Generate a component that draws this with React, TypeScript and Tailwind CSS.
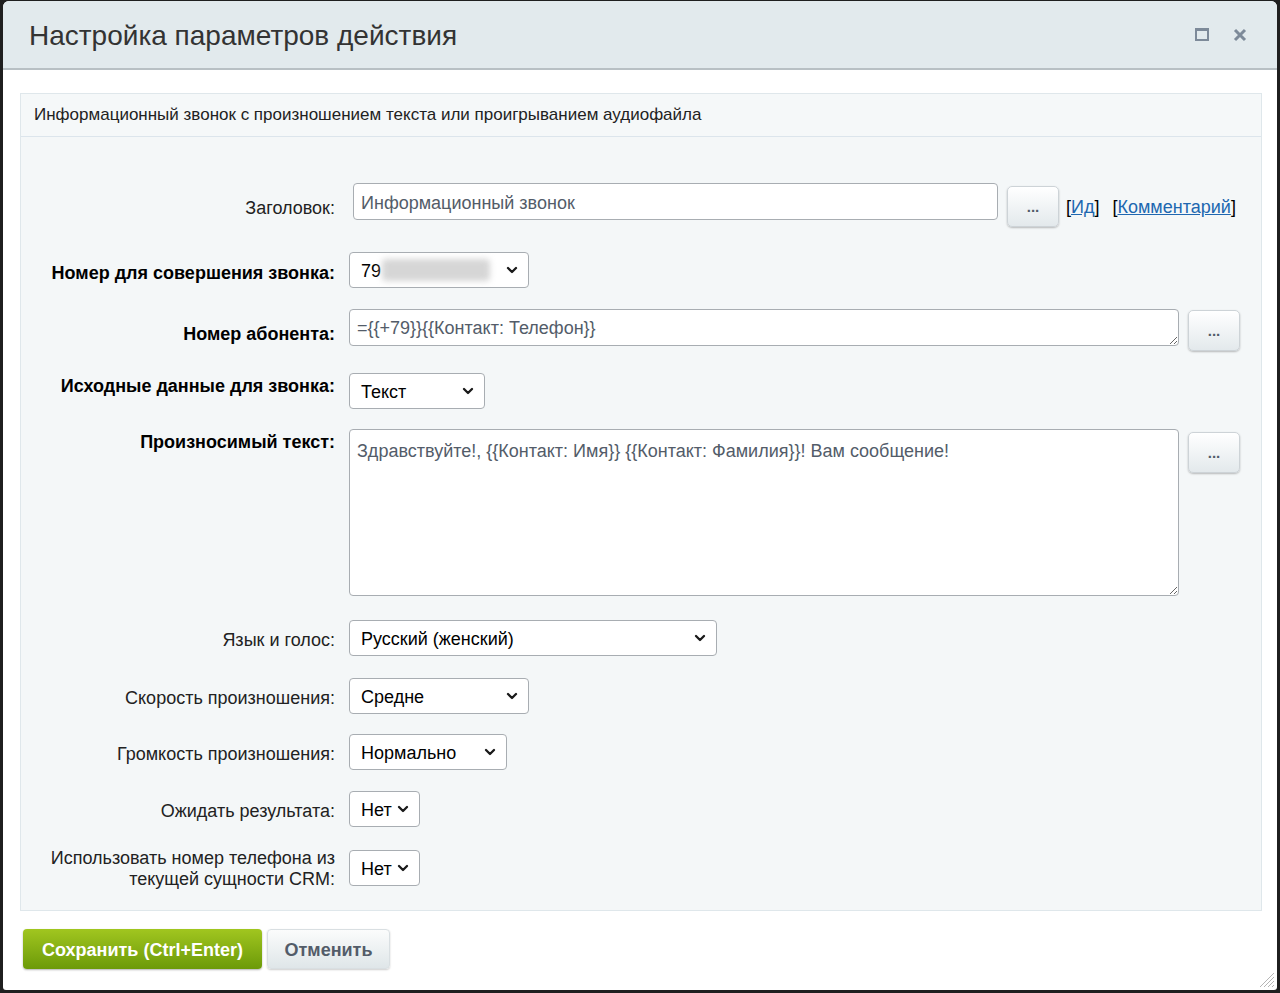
import { ChevronDown } from "lucide-react";

const font = "font-['Helvetica','Liberation_Sans',Arial,sans-serif]";

function Select({ value, w, blur }: { value: string; w: string; blur?: boolean }) {
  return (
    <div
      className={`relative flex h-[36px] items-center rounded-[4px] border border-[#a8adb2] bg-white pl-[11px] pt-[3px] text-[18px] text-black ${w}`}
    >
      <span>{value}</span>
      {blur && <span className="ml-[1px] -mt-[3px] h-[22px] w-[108px] rounded bg-[#d6d6d6] blur-[3px]" />}
      <ChevronDown
        size={16}
        strokeWidth={3.5}
        className="absolute right-[8px] top-[9px] text-[#1a1a1a]"
      />
    </div>
  );
}

function DotsButton({ className = "" }: { className?: string }) {
  return (
    <button
      className={`flex h-[41px] w-[52px] items-center justify-center rounded-[5px] border border-[#cdd3d7] bg-gradient-to-b from-[#ffffff] to-[#e3e9ec] text-[15px] font-bold leading-none text-[#535c69] shadow-[0_1px_2px_rgba(0,0,0,0.25)] ${className}`}
    >
      ...
    </button>
  );
}

function Label({ children, bold, className = "" }: { children: React.ReactNode; bold?: boolean; className?: string }) {
  return (
    <div
      className={`w-[314px] shrink-0 text-right text-[18px] leading-[21px] ${bold ? "font-bold text-black" : "text-[#222]"} ${className}`}
    >
      {children}
    </div>
  );
}

export default function App() {
  return (
    <div className={`h-[993px] w-[1280px] overflow-hidden bg-[#1f1f1f] pt-[1px] ${font}`}>
      <div className="relative ml-[3px] mr-[3px] flex h-[989px] flex-col overflow-hidden rounded-t-[6px] rounded-b-[3px] bg-white">
        {/* header */}
        <div className="flex h-[69px] shrink-0 items-center border-b-2 border-[#b8c0c4] bg-[#e2eaed] pl-[26px] pr-[30px]">
          <h1 className="flex-1 pt-[3px] text-[28px] font-normal text-[#333]">Настройка параметров действия</h1>
          <div className="flex items-center gap-[24px]">
            <svg width="14" height="13" viewBox="0 0 14 13" className="text-[#7d8a99]">
              <rect x="1" y="1" width="12" height="11" fill="none" stroke="currentColor" strokeWidth="2" />
              <rect x="1" y="1" width="12" height="2" fill="currentColor" />
            </svg>
            <svg width="14" height="14" viewBox="0 0 14 14" className="text-[#7d8a99]">
              <path d="M2 2 L12 12 M12 2 L2 12" stroke="currentColor" strokeWidth="3" />
            </svg>
          </div>
        </div>

        {/* panel */}
        <div className="ml-[17px] mr-[15px] mt-[23px] flex h-[818px] flex-col border border-[#dfe7eb] bg-[#f4f7f8]">
          <div className="flex h-[43px] shrink-0 items-center border-b border-[#dce5ec] bg-[#f5f8f9] pl-[13px] text-[17px] text-[#222]">
            Информационный звонок с произношением текста или проигрыванием аудиофайла
          </div>

          <div className="flex flex-col pt-[46px]">
            {/* Заголовок */}
            <div className="flex items-start">
              <Label className="pt-[15px]">Заголовок:</Label>
              <div className="ml-[18px] flex items-start">
                <div className="flex h-[37px] w-[645px] items-center rounded-[4px] border border-[#a8adb2] bg-white pl-[7px] pt-[3px] text-[18px] text-[#535c69]">
                  Информационный звонок
                </div>
                <DotsButton className="ml-[9px] mt-[3px]" />
                <div className="ml-[7px] mt-[14px] text-[18px] leading-[21px] text-black">
                  [<a className="text-[#2067b0] underline">Ид</a>]
                </div>
                <div className="ml-[13px] mt-[14px] text-[18px] leading-[21px] text-black">
                  [<a className="text-[#2067b0] underline">Комментарий</a>]
                </div>
              </div>
            </div>

            {/* Номер для совершения */}
            <div className="mt-[25px] flex items-start">
              <Label bold className="pt-[11px]">Номер для совершения звонка:</Label>
              <div className="ml-[14px]">
                <Select value="79" w="w-[180px]" blur />
              </div>
            </div>

            {/* Номер абонента */}
            <div className="mt-[21px] flex items-start">
              <Label bold className="pt-[15px]">Номер абонента:</Label>
              <div className="ml-[14px] flex items-start">
                <textarea
                  readOnly
                  value="={{+79}}{{Контакт: Телефон}}"
                  className="block h-[37px] w-[830px] resize rounded-[4px] border border-[#a8adb2] bg-white px-[7px] pt-[8px] text-[18px] leading-[21px] text-[#535c69] outline-none"
                />
                <DotsButton className="ml-[9px] mt-[1px]" />
              </div>
            </div>

            {/* Исходные данные */}
            <div className="mt-[22px] flex items-start">
              <Label bold className="pt-[3px]">Исходные данные для звонка:</Label>
              <div className="ml-[14px]">
                <Select value="Текст" w="w-[136px]" />
              </div>
            </div>

            {/* Произносимый текст */}
            <div className="mt-[20px] flex items-start">
              <Label bold className="pt-[3px]">Произносимый текст:</Label>
              <div className="ml-[14px] flex items-start">
                <textarea
                  readOnly
                  value="Здравствуйте!, {{Контакт: Имя}} {{Контакт: Фамилия}}! Вам сообщение!"
                  className="block h-[167px] w-[830px] resize rounded-[4px] border border-[#a8adb2] bg-white px-[7px] pt-[11px] text-[18px] leading-[21px] text-[#535c69] outline-none"
                />
                <DotsButton className="ml-[9px] mt-[3px]" />
              </div>
            </div>

            {/* Язык и голос */}
            <div className="mt-[24px] flex items-center">
              <Label className="pt-[4px]">Язык и голос:</Label>
              <div className="ml-[14px]">
                <Select value="Русский (женский)" w="w-[368px]" />
              </div>
            </div>

            <div className="mt-[22px] flex items-center">
              <Label className="pt-[4px]">Скорость произношения:</Label>
              <div className="ml-[14px]">
                <Select value="Средне" w="w-[180px]" />
              </div>
            </div>

            <div className="mt-[20px] flex items-center">
              <Label className="pt-[4px]">Громкость произношения:</Label>
              <div className="ml-[14px]">
                <Select value="Нормально" w="w-[158px]" />
              </div>
            </div>

            <div className="mt-[21px] flex items-center">
              <Label className="pt-[4px]">Ожидать результата:</Label>
              <div className="ml-[14px]">
                <Select value="Нет" w="w-[71px]" />
              </div>
            </div>

            <div className="mt-[19px] flex items-center">
              <Label className="pt-[2px]">
                Использовать номер телефона из
                <br />
                текущей сущности CRM:
              </Label>
              <div className="ml-[14px]">
                <Select value="Нет" w="w-[71px]" />
              </div>
            </div>
          </div>
        </div>

        {/* footer */}
        <div className="ml-[20px] mt-[18px] flex items-center gap-[5px]">
          <button className="flex h-[40px] w-[239px] items-center justify-center rounded-[4px] bg-gradient-to-b from-[#a1c61f] to-[#6c9a08] pt-[2px] text-[18px] font-bold text-white shadow-[0_1px_2px_rgba(0,0,0,0.3)]">
            Сохранить (Ctrl+Enter)
          </button>
          <button className="flex h-[40px] w-[123px] items-center justify-center rounded-[4px] border border-[#d9dfe2] bg-gradient-to-b from-[#fbfcfc] to-[#dfe6e9] pt-[2px] text-[18px] font-bold text-[#535c69] shadow-[0_1px_2px_rgba(0,0,0,0.2)]">
            Отменить
          </button>
        </div>

        {/* resize grip */}
        <svg width="16" height="16" viewBox="0 0 16 16" className="absolute bottom-[2px] right-[2px] text-[#b5b5b5]">
          <path d="M15 1 L1 15 M15 5 L5 15 M15 9 L9 15 M15 13 L13 15" stroke="currentColor" strokeWidth="1" />
        </svg>
      </div>
    </div>
  );
}
